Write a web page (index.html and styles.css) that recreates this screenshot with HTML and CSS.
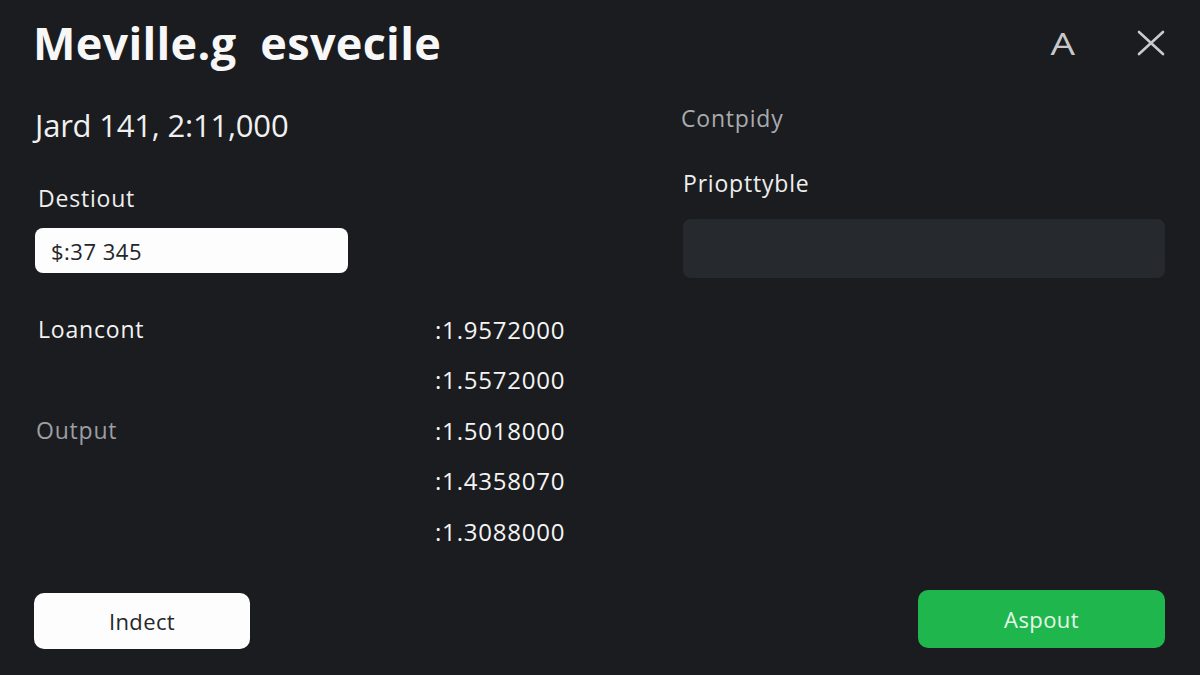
FILE: index.html
```html
<!DOCTYPE html>
<html lang="en">
<head>
    <meta charset="UTF-8">
    <meta name="viewport" content="width=device-width, initial-scale=1.0">
    <title>Meville.g esvecile</title>
    <link rel="stylesheet" href="styles.css">
</head>
<body>
    <div class="app">
        <header class="header">
            <h1>Meville.g&nbsp; esvecile</h1>
            <div class="header-actions">
                <span class="font-toggle">A</span>
                <button class="close" type="button" aria-label="Close">
                    <svg width="28" height="26" viewBox="0 0 28 26">
                        <path d="M2 2 L26 24 M26 2 L2 24" stroke="#c9cacc" stroke-width="2.6" stroke-linecap="round" fill="none"/>
                    </svg>
                </button>
            </div>
        </header>

        <main class="main">
            <section class="left">
                <div class="summary">Jard 141, 2:11,000</div>

                <label class="field-label" for="dest">Destiout</label>
                <input class="field" id="dest" type="text" value="$:37 345">

                <div class="stats">
                    <span class="stat-label">Loancont</span>
                    <span class="stat-value">:1.9572000</span>
                    <span></span>
                    <span class="stat-value">:1.5572000</span>
                    <span class="stat-label muted">Output</span>
                    <span class="stat-value">:1.5018000</span>
                    <span></span>
                    <span class="stat-value">:1.4358070</span>
                    <span></span>
                    <span class="stat-value">:1.3088000</span>
                </div>
            </section>

            <section class="right">
                <div class="side-title">Contpidy</div>
                <div class="side-label">Priopttyble</div>
                <div class="side-box"></div>
            </section>
        </main>

        <footer class="footer">
            <button class="btn btn-light" type="button">Indect</button>
            <button class="btn btn-green" type="button">Aspout</button>
        </footer>
    </div>
</body>
</html>
```

FILE: styles.css
```css
body {
    margin: 0;
    background-color: #1a1c20;
    font-family: "Open Sans", "Liberation Sans", sans-serif;
    color: #f2f2f2;
}
.app {
    height: 675px;
    box-sizing: border-box;
    padding: 19px 35px 26px 33px;
    display: flex;
    flex-direction: column;
}
.header {
    display: flex;
    justify-content: space-between;
    align-items: center;
    height: 48px;
}
h1 {
    margin: 0;
    font-size: 45px;
    font-weight: 700;
    line-height: 48px;
    letter-spacing: 0.3px;
    color: #f7f7f7;
}
.header-actions {
    display: flex;
    align-items: center;
    gap: 64px;
}
.font-toggle {
    display: inline-block;
    font-size: 31px;
    line-height: 48px;
    color: #c8c8ca;
    transform: scaleX(1.25);
}
.close {
    background: none;
    border: none;
    padding: 0;
    display: flex;
}
.main {
    display: grid;
    grid-template-columns: 648px 1fr;
}
.left {
    display: flex;
    flex-direction: column;
    padding-left: 2px;
}
.summary {
    margin-top: 40px;
    font-size: 31px;
    font-weight: 400;
    line-height: 36px;
    letter-spacing: -0.2px;
    color: #f0f0f0;
}
.field-label {
    margin-top: 41px;
    padding-left: 3px;
    font-size: 23px;
    line-height: 28px;
    letter-spacing: 0.8px;
    color: #eeeeee;
}
.field {
    margin-top: 16px;
    width: 313px;
    height: 45px;
    box-sizing: border-box;
    border: none;
    border-radius: 8px;
    background-color: #fdfdfd;
    padding: 0 16px;
    font-family: "Open Sans", "Liberation Sans", sans-serif;
    font-size: 22px;
    letter-spacing: 0.5px;
    color: #23262b;
}
.stats {
    margin-top: 31px;
    display: grid;
    grid-template-columns: 400px auto;
    grid-auto-rows: 50.5px;
    align-items: center;
}
.stat-label {
    padding-left: 3px;
    font-size: 23px;
    letter-spacing: 0.8px;
    color: #f2f2f2;
}
.stat-label.muted {
    padding-left: 1px;
    color: #9c9ea2;
}
.stat-value {
    font-size: 24px;
    letter-spacing: 0.8px;
    color: #f4f4f4;
}
.right {
    display: flex;
    flex-direction: column;
}
.side-title {
    margin-top: 37px;
    font-size: 23px;
    line-height: 28px;
    letter-spacing: 0.8px;
    color: #a9abae;
}
.side-label {
    margin-top: 37px;
    padding-left: 2px;
    font-size: 23px;
    line-height: 28px;
    letter-spacing: 0.8px;
    color: #eeeeee;
}
.side-box {
    margin-top: 22px;
    margin-left: 2px;
    height: 59px;
    border-radius: 8px;
    background-color: #26292d;
}
.footer {
    margin-top: auto;
    display: flex;
    justify-content: space-between;
    align-items: flex-end;
}
.btn {
    border: none;
    border-radius: 10px;
    font-family: "Open Sans", "Liberation Sans", sans-serif;
    font-size: 22px;
    letter-spacing: 0.4px;
    cursor: pointer;
}
.btn-light {
    margin-left: 1px;
    width: 216px;
    height: 56px;
    background-color: #fdfdfd;
    color: #25272b;
}
.btn-green {
    width: 247px;
    height: 58px;
    margin-bottom: 1px;
    background-color: #1fb74d;
    color: #e6f7e8;
}
```
